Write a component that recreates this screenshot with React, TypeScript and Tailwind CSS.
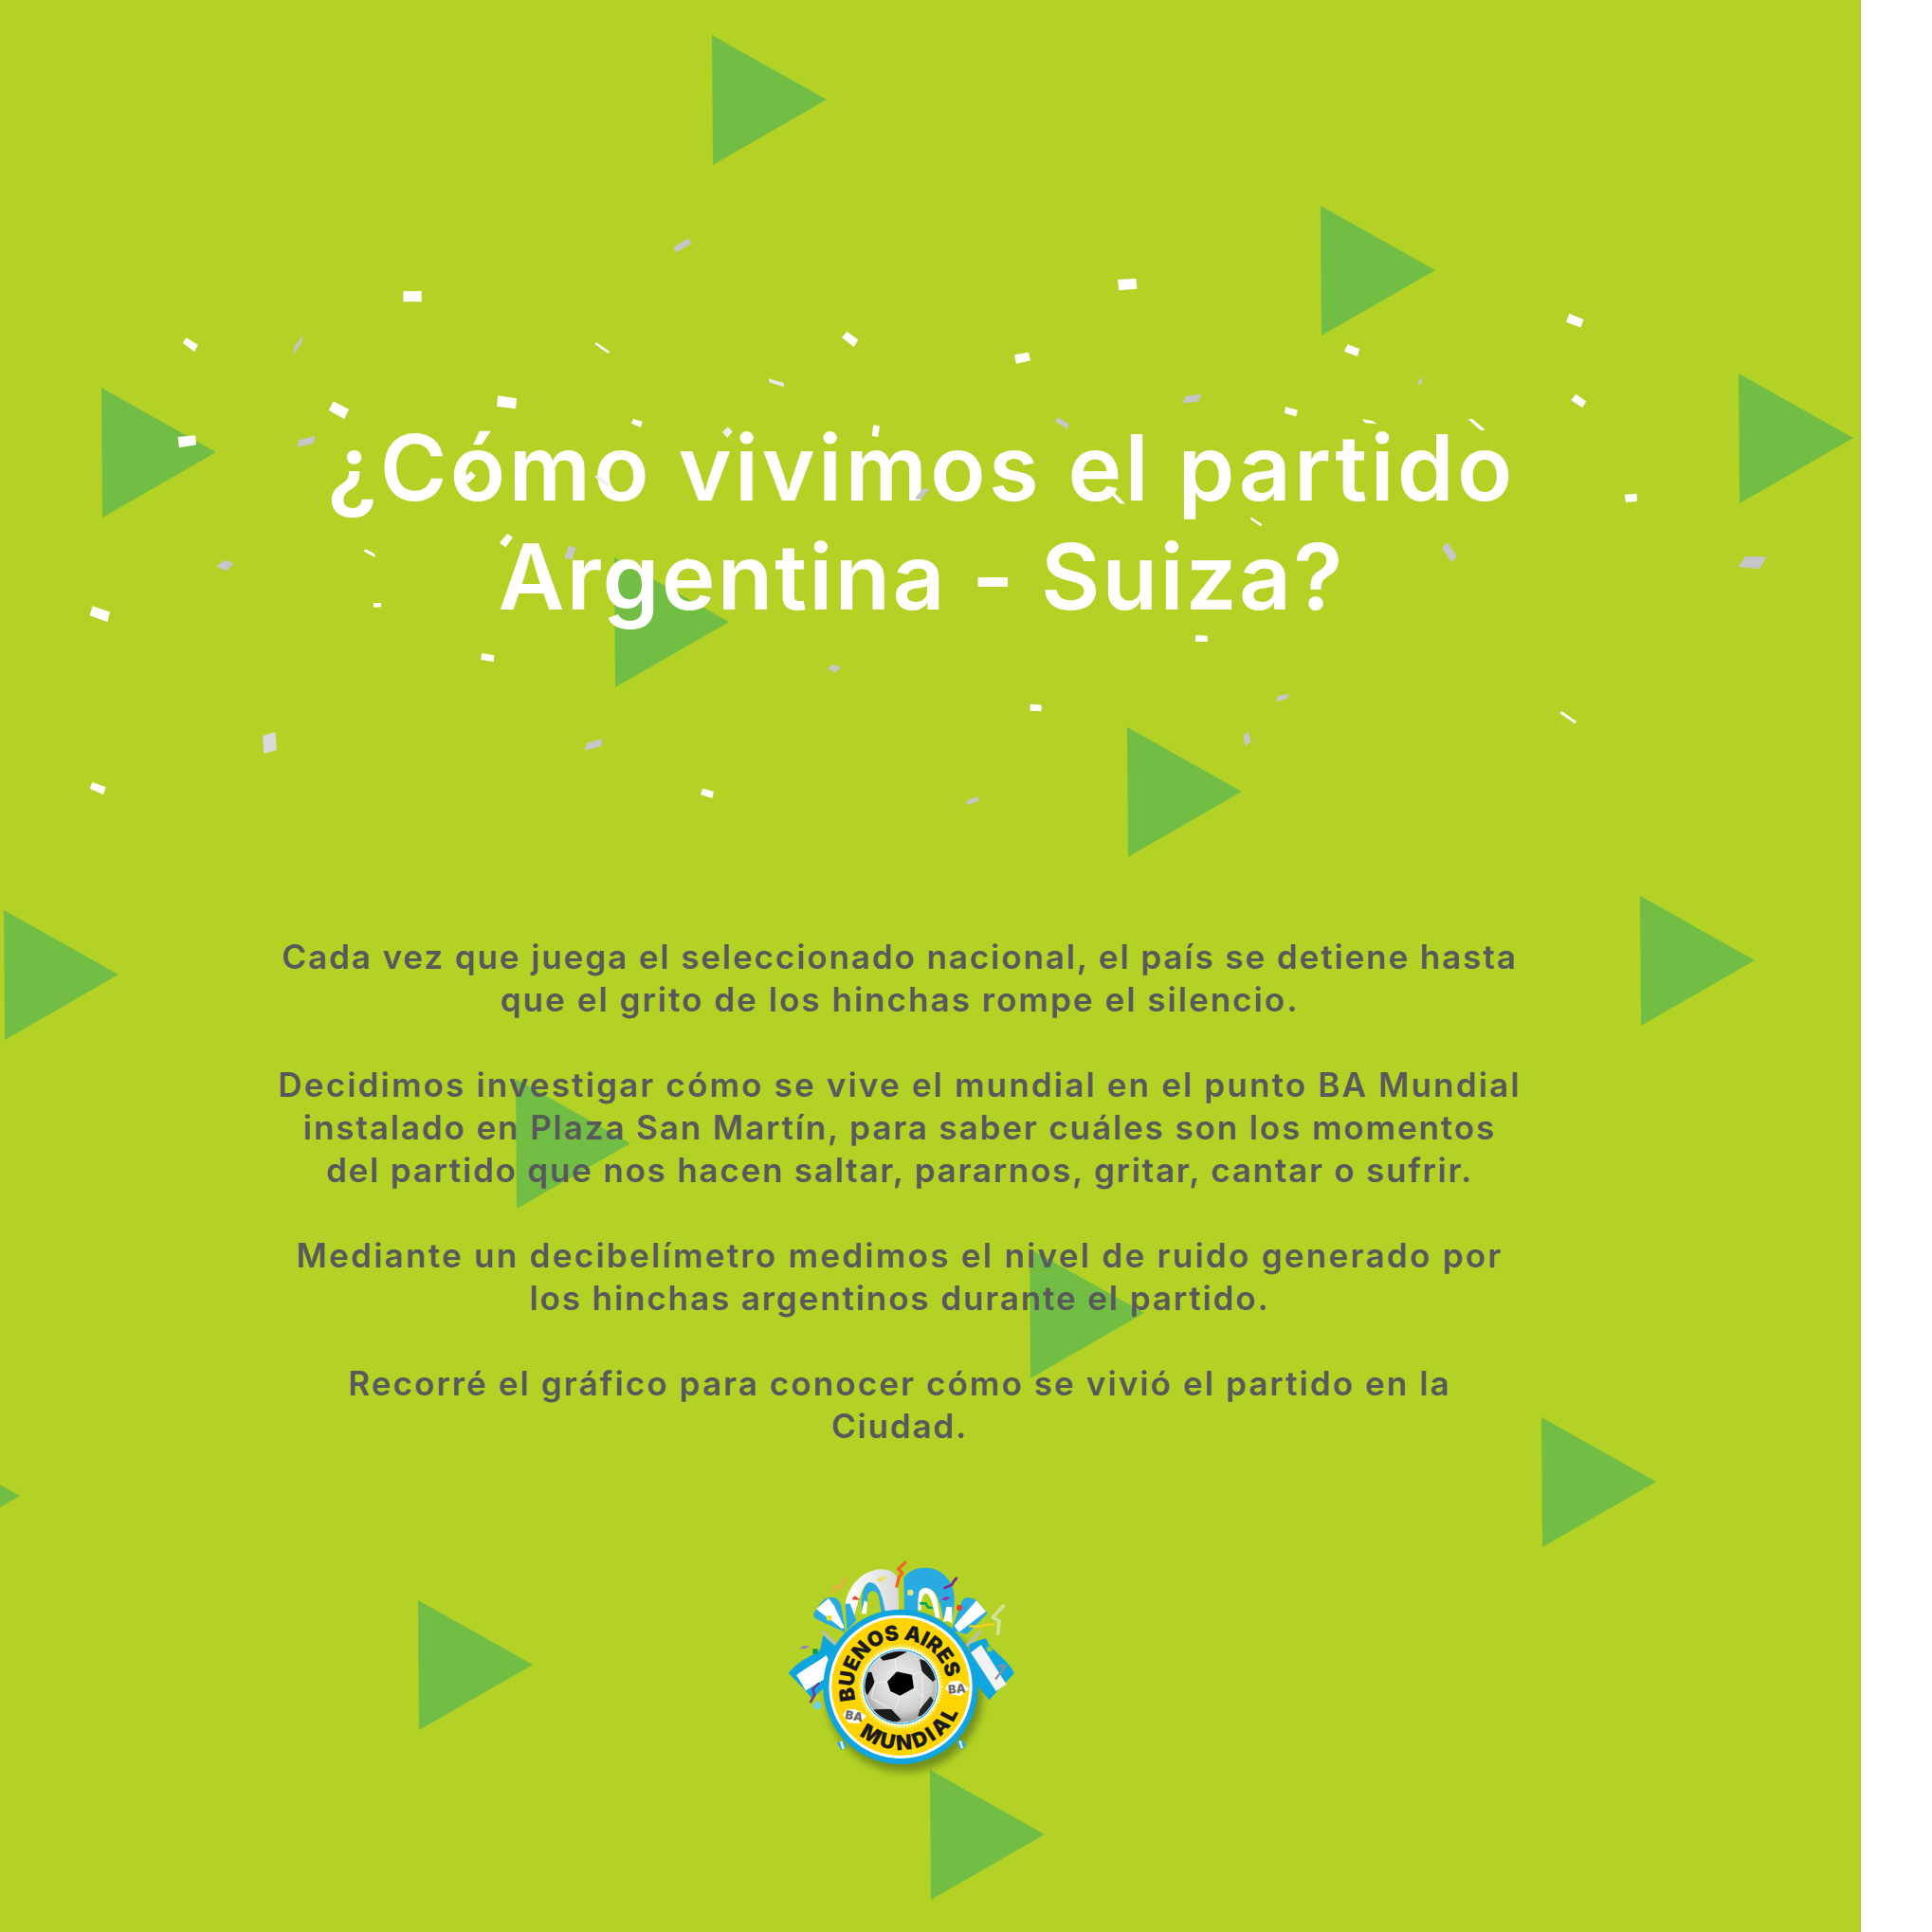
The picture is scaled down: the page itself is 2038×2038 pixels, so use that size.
const triangles: [number, number][] = [
  [751, 37], [1393, 217], [107, 409], [1834, 394], [648, 588], [1189, 767], [4, 960],
  [1730, 945], [544, 1138], [1086, 1317], [1626, 1495], [441, 1688], [981, 1867], [-100, 1510],
];

const W = "#ffffff";
const G = "#c6c6c8";
type Piece = [number, number, number, number, string, number[]];
const pieces: Piece[] = [
  [1000, 220, 1.5106, 2.24, W, [990, 248, 1013, 262, 1008, 281, 985, 268]],
  [80, 240, 3, 3, W, [338, 365, 350, 349, 387, 372, 375, 393]],
  [80, 240, 3, 3, G, [685, 405, 692, 375, 720, 340, 712, 370]],
  [80, 240, 3, 3, W, [1036, 202, 1094, 201, 1094, 235, 1036, 235]],
  [80, 240, 3, 3, W, [800, 578, 815, 550, 864, 575, 850, 606]],
  [80, 240, 3, 3, W, [1336, 532, 1395, 541, 1392, 574, 1332, 566]],
  [80, 240, 3, 3, W, [323, 663, 378, 658, 381, 688, 327, 696]],
  [80, 240, 3, 3, G, [706, 672, 757, 660, 752, 683, 700, 695]],
  [80, 240, 3, 3, W, [1228, 793, 1250, 771, 1266, 786, 1241, 810]],
  [600, 240, 3, 3, G, [331, 62, 378, 34, 389, 50, 340, 79]],
  [600, 240, 3, 3, W, [82, 369, 87, 364, 129, 392, 125, 399]],
  [600, 240, 3, 3, W, [864, 348, 880, 329, 916, 355, 902, 378]],
  [600, 240, 3, 3, "#e8e8e8", [632, 478, 680, 491, 681, 505, 634, 490]],
  [600, 240, 3, 3, W, [1410, 403, 1455, 395, 1461, 421, 1416, 431]],
  [600, 240, 3, 3, W, [198, 620, 204, 605, 233, 614, 228, 632]],
  [600, 240, 3, 3, "#eeeeee", [486, 648, 503, 631, 519, 646, 501, 665]],
  [600, 240, 3, 3, W, [964, 625, 984, 628, 979, 663, 959, 660]],
  [600, 240, 3, 3, G, [1540, 615, 1546, 600, 1582, 620, 1578, 638]],
  [600, 240, 3, 3, G, [1095, 858, 1120, 826, 1142, 828, 1113, 862]],
  [600, 240, 3, 3, "#f0f0f0", [80, 787, 95, 785, 130, 812, 115, 815]],
  [1120, 240, 3, 3, W, [177, 165, 235, 161, 238, 194, 181, 199]],
  [1120, 240, 3, 3, W, [905, 370, 943, 384, 936, 408, 894, 392]],
  [1120, 240, 3, 3, G, [1138, 472, 1140, 490, 1131, 502, 1128, 488]],
  [1120, 240, 3, 3, G, [392, 533, 443, 527, 431, 551, 382, 556]],
  [1120, 240, 3, 3, W, [708, 567, 747, 578, 741, 598, 705, 587]],
  [1120, 240, 3, 3, W, [951, 606, 985, 612, 996, 622, 960, 618]],
  [1120, 240, 3, 3, W, [1285, 606, 1300, 606, 1340, 640, 1326, 642]],
  [1120, 240, 3, 3, W, [143, 818, 165, 838, 202, 875, 183, 873, 155, 842]],
  [1120, 240, 3, 3, W, [601, 918, 634, 939, 630, 945, 597, 923]],
  [80, 560, 3, 3, G, [445, 113, 470, 92, 500, 102, 478, 127]],
  [80, 560, 3, 3, W, [913, 60, 918, 58, 945, 73, 947, 84, 912, 65]],
  [80, 560, 3, 3, W, [942, 228, 966, 228, 966, 241, 942, 242]],
  [80, 560, 3, 3, W, [53, 238, 108, 257, 100, 288, 44, 268]],
  [80, 560, 3, 3, W, [1284, 387, 1324, 394, 1322, 414, 1282, 408]],
  [80, 560, 3, 3, "#d9d9d9", [591, 648, 631, 637, 636, 693, 595, 706]],
  [80, 560, 3, 3, W, [52, 795, 95, 811, 87, 835, 44, 816]],
  [80, 560, 3, 3, W, [1365, 9, 1383, 20, 1360, 52, 1341, 38]],
  [600, 560, 3, 3, G, [-14, 87, 0, 47, 23, 53, 10, 90]],
  [600, 560, 3, 3, W, [360, 100, 375, 86, 395, 100, 385, 118]],
  [600, 560, 3, 3, G, [818, 436, 838, 423, 860, 433, 845, 449]],
  [600, 560, 3, 3, W, [1460, 548, 1496, 551, 1496, 571, 1460, 569]],
  [600, 560, 3, 3, G, [56, 672, 106, 658, 102, 682, 51, 695]],
  [600, 560, 3, 3, W, [423, 815, 459, 825, 454, 846, 417, 835]],
  [600, 560, 3, 3, G, [1262, 852, 1298, 840, 1295, 857, 1257, 867]],
  [1120, 400, 2.01, 3, W, [1090, 47, 1112, 70, 1104, 90, 1080, 67]],
  [1120, 400, 2.01, 3, W, [1193, 365, 1219, 362, 1220, 386, 1196, 390]],
  [1120, 400, 2.01, 3, G, [806, 535, 818, 516, 838, 560, 827, 580]],
  [1120, 400, 2.01, 3, G, [1450, 560, 1495, 562, 1479, 600, 1434, 594]],
  [1120, 400, 2.01, 3, W, [284, 810, 309, 812, 309, 831, 283, 830]],
  [1120, 400, 2.01, 3, G, [458, 1003, 481, 995, 479, 1012, 455, 1020]],
  [1120, 400, 2.01, 3, G, [385, 1127, 396, 1115, 401, 1147, 389, 1162]],
  [1120, 400, 2.01, 3, W, [1058, 1052, 1062, 1052, 1091, 1083, 1088, 1090, 1056, 1057]],
  [1120, 400, 2.01, 3, W, [402, 437, 424, 460, 422, 465, 400, 442]],
];

function pts([ox, oy, sx, sy, , p]: Piece) {
  const out: string[] = [];
  for (let i = 0; i < p.length; i += 2) out.push(`${ox + p[i] / sx},${oy + p[i + 1] / sy}`);
  return out.join(" ");
}

function Logo() {
  return (
    <svg viewBox="0 0 960 840" width={320} height={280} className="block">
      <defs>
        <filter id="sh" x="-20%" y="-20%" width="140%" height="140%">
          <feGaussianBlur stdDeviation="12" />
        </filter>
        <radialGradient id="ball" cx="50%" cy="42%" r="62%">
          <stop offset="0%" stopColor="#f2f2f2" />
          <stop offset="70%" stopColor="#cfcfcf" />
          <stop offset="100%" stopColor="#8a8a8a" />
        </radialGradient>
        <linearGradient id="horn" x1="0" y1="0" x2="1" y2="0">
          <stop offset="0%" stopColor="#ffffff" />
          <stop offset="100%" stopColor="#d8d8d8" />
        </linearGradient>
        <clipPath id="ballClip">
          <circle cx="450" cy="478" r="113" />
        </clipPath>
        <path id="topArc" d="M450 626 A148 148 0 1 1 450.1 626" />
        <path id="botArc" d="M450 278 A200 200 0 1 0 450.1 278" />
      </defs>

      <circle cx="462" cy="500" r="248" fill="#5d7a12" opacity="0.75" filter="url(#sh)" />

      {/* horns */}
      <path d="M275 215 C285 160 325 112 385 106 C412 104 432 116 442 135 L445 262 L390 250 C390 200 372 152 352 148 C335 146 320 190 305 250 L280 250 Z" fill="url(#horn)" />
      <path d="M350 148 C328 160 322 210 330 248 L345 215 L345 190 C352 170 372 170 380 190 L392 260 L405 262 C395 190 380 145 350 148 Z" fill="#29abe2" />
      <path d="M335 205 L345 210 L342 248 L326 246 Z" fill="#ffffff" />
      <path d="M275 215 L290 215 L310 268 L280 300 Z" fill="#29abe2" />
      <path d="M460 135 C475 105 520 95 555 105 C600 120 625 165 620 215 L612 270 L585 262 C575 195 555 165 535 168 C515 170 508 195 505 240 L462 240 Z" fill="#29abe2" />
      <path d="M510 175 C525 155 555 165 565 200 L575 262 L560 258 C550 195 535 175 525 185 C515 195 515 215 515 235 L505 235 C505 210 505 190 510 175 Z" fill="#ffffff" />
      <path d="M595 225 L613 225 L613 278 L600 270 L585 272 Z" fill="#ffffff" />

      {/* upper pennants */}
      <path d="M178 240 C190 225 205 200 215 198 C235 190 255 195 263 225 L275 305 C240 290 205 275 178 260 Q172 250 178 240 Z" fill="#29abe2" />
      <path d="M183 232 L222 198 L240 222 L272 290 L265 295 C235 270 205 250 183 232 Z" fill="#ffffff" />
      <path d="M610 300 L645 205 C655 190 680 195 690 205 L725 245 L660 312 Z" fill="#29abe2" />
      <path d="M620 285 L690 205 L720 240 L635 305 Z" fill="#ffffff" />

      {/* lower flags */}
      <path d="M95 435 C125 395 170 380 195 362 L205 315 L245 350 L240 420 L210 480 L170 515 C150 490 120 460 95 435 Z" fill="#0fa5de" />
      <path d="M120 442 C145 420 180 405 215 378 L235 420 L215 450 L150 490 C140 475 130 455 120 442 Z" fill="#ffffff" />
      <path d="M665 345 L700 330 L720 325 L730 345 C760 380 790 395 810 435 L730 520 L690 470 Z" fill="#0fa5de" />
      <path d="M672 370 L705 345 L785 470 L752 492 Z" fill="#f2f2f2" />

      {/* poles */}
      <path d="M205 305 L248 345" stroke="#bcbcbc" strokeWidth="9" strokeLinecap="round" />
      <path d="M662 345 L702 305" stroke="#bcbcbc" strokeWidth="9" strokeLinecap="round" />

      {/* little pieces */}
      <path d="M248 655 L268 648 L280 668 L262 678 Z" fill="#29abe2" />
      <path d="M258 652 L265 650 L272 672 L265 676 Z" fill="#ffffff" />
      <path d="M626 652 L645 645 L658 665 L640 678 Z" fill="#29abe2" />
      <path d="M634 650 L640 648 L648 670 L642 674 Z" fill="#ffffff" />

      {/* confetti */}
      <g fill="none" strokeLinecap="round" strokeLinejoin="round">
        <path d="M236 180 L243 160 L258 165 L275 135" stroke="#f5a83f" strokeWidth="8" />
        <path d="M438 160 L445 130 L456 118 L443 105 L465 85" stroke="#f26522" strokeWidth="10" />
        <path d="M590 165 L612 155 L618 145 L626 135" stroke="#7b2d8e" strokeWidth="9" />
        <path d="M514 214 L530 214 L536 226 L548 228" stroke="#0aa34f" strokeWidth="8" />
        <path d="M775 222 L742 258 L762 270 L758 310" stroke="#d4e39b" strokeWidth="11" />
        <path d="M670 286 L700 288 L720 282 L745 280" stroke="#f9d11a" strokeWidth="7" />
        <path d="M190 468 L172 485 L178 505 L165 526" stroke="#7b2d8e" strokeWidth="7" />
        <path d="M752 452 L782 412 L762 412" stroke="#8e8e8e" strokeWidth="7" />
      </g>
      <polygon points="372,140 395,128 408,130 388,146" fill="#f2e04f" />
      <polygon points="295,202 305,190 322,203" fill="#e8402a" />
      <polygon points="578,203 590,193 608,195 595,205" fill="#8b3f9c" />
      <polygon points="130,357 145,347 162,350 147,358" fill="#8e7cc3" />
      <rect x="172" y="358" width="16" height="16" fill="#0a9b4f" />
      <rect x="723" y="350" width="17" height="17" fill="#8fc63f" />
      <circle cx="481" cy="180" r="10" fill="#d7e38a" />
      <circle cx="636" cy="228" r="9" fill="#ee3b2b" />
      <circle cx="224" cy="260" r="9" fill="#e6e02f" />
      <circle cx="187" cy="537" r="13" fill="#6fcdf0" />

      {/* badge */}
      <circle cx="450" cy="478" r="245" fill="#0fa5de" />
      <circle cx="450" cy="478" r="227" fill="#ffffff" />
      <circle cx="450" cy="478" r="218" fill="#ffd400" />
      <circle cx="450" cy="478" r="127" fill="#fff3a0" />
      <circle cx="450" cy="478" r="130" fill="none" stroke="#fff3a0" strokeWidth="7" strokeDasharray="5 5" />
      <circle cx="450" cy="478" r="122" fill="#ffffff" />
      <circle cx="450" cy="478" r="119" fill="#29abe2" />
      <circle cx="450" cy="478" r="115" fill="#ffffff" />

      {/* ball */}
      <circle cx="450" cy="478" r="113" fill="url(#ball)" />
      <g clipPath="url(#ballClip)">
        <polygon points="408,462 438,430 486,440 492,482 448,506 418,492" fill="#000000" />
        <polygon points="375,375 430,355 475,365 432,388 395,395" fill="#111111" />
        <polygon points="510,390 540,400 565,450 552,462 518,430" fill="#1c1c1c" />
        <polygon points="337,430 358,432 368,465 345,505 330,480" fill="#111111" />
        <polygon points="365,550 420,548 452,582 420,600 370,570" fill="#1c1c1c" />
        <polygon points="512,548 545,508 560,530 530,575 505,570" fill="#262626" />
        <g stroke="#f8f8f8" strokeWidth="2.5" fill="none">
          <path d="M438 430 L432 388 M486 440 L518 430 M492 482 L520 510 M448 506 L432 548 M408 462 L368 465" />
          <path d="M368 465 L358 515 L420 548 M520 510 L512 548 M518 430 L520 510" />
        </g>
      </g>

      {/* lettering */}
      <g transform="rotate(-14 450 478)" fontFamily="Inter, 'Liberation Sans', sans-serif" fontWeight="900" fill="#1b1b1b">
        <text fontSize="66" letterSpacing="-1">
          <textPath href="#topArc" startOffset="50%" textAnchor="middle">BUENOS AIRES</textPath>
        </text>
        <text fontSize="66" letterSpacing="9">
          <textPath href="#botArc" startOffset="50%" textAnchor="middle">MUNDIAL</textPath>
        </text>
      </g>

      {/* BA tags */}
      <polygon points="266,566 280,550 305,548 342,570 318,594 285,592" fill="#ffffff" />
      <text x="303" y="584" transform="rotate(10 303 570)" textAnchor="middle" fontSize="38" fontWeight="900" fontFamily="Inter, sans-serif" fill="#6a6a6a">BA</text>
      <polygon points="590,484 606,462 635,458 667,484 640,507 610,502" fill="#ffffff" />
      <text x="628" y="498" transform="rotate(-5 628 484)" textAnchor="middle" fontSize="38" fontWeight="900" fontFamily="Inter, sans-serif" fill="#6a6a6a">BA</text>
    </svg>
  );
}

const body: [string, string][][] = [
  [
    ["Cada vez que juega el seleccionado nacional, el país se detiene hasta", "tracking-[1.91px]"],
    ["que el grito de los hinchas rompe el silencio.", "tracking-[2.05px]"],
  ],
  [
    ["Decidimos investigar cómo se vive el mundial en el punto BA Mundial", "tracking-[2.17px]"],
    ["instalado en Plaza San Martín, para saber cuáles son los momentos", "tracking-[1.9px]"],
    ["del partido que nos hacen saltar, pararnos, gritar, cantar o sufrir.", "tracking-[1.79px]"],
  ],
  [
    ["Mediante un decibelímetro medimos el nivel de ruido generado por", "tracking-[2.29px]"],
    ["los hinchas argentinos durante el partido.", "tracking-[1.9px]"],
  ],
  [
    ["Recorré el gráfico para conocer cómo se vivió el partido en la", "tracking-[2.1px]"],
    ["Ciudad.", "tracking-[1.8px]"],
  ],
];

export default function App() {
  return (
    <div className="h-[2038px] w-[2038px] bg-white">
      <div className="relative flex h-[2038px] w-[1963px] flex-col items-center overflow-hidden bg-[#b4d226] font-['Inter',sans-serif]">
        <svg className="absolute left-0 top-0" width={1963} height={2038}>
          {triangles.map(([x, y], i) => (
            <polygon key={i} points={`${x},${y} ${x + 1},${y + 137} ${x + 121},${y + 68}`} fill="#72be45" />
          ))}
        </svg>

        <h1 className="relative mr-[19px] mt-[436px] whitespace-nowrap text-center text-[96px] font-semibold leading-[115px] text-white">
          <span className="block tracking-[3.3px]">¿Cómo vivimos el partido</span>
          <span className="block tracking-[2.1px]">Argentina - Suiza?</span>
        </h1>

        <div className="relative mr-[65px] mt-[321px] flex flex-col gap-[45px] whitespace-nowrap text-center text-[35px] font-semibold leading-[45px] text-[#58595b]">
          {body.map((para, i) => (
            <p key={i}>
              {para.map(([line, track], j) => (
                <span key={j} className={`block ${track}`}>{line}</span>
              ))}
            </p>
          ))}
        </div>

        <div className="relative mr-[43px] mt-[93px]">
          <Logo />
        </div>

        <svg className="absolute left-0 top-0" width={1963} height={2038}>
          {pieces.map((p, i) => (
            <polygon key={i} points={pts(p)} fill={p[4]} />
          ))}
        </svg>
      </div>
    </div>
  );
}
